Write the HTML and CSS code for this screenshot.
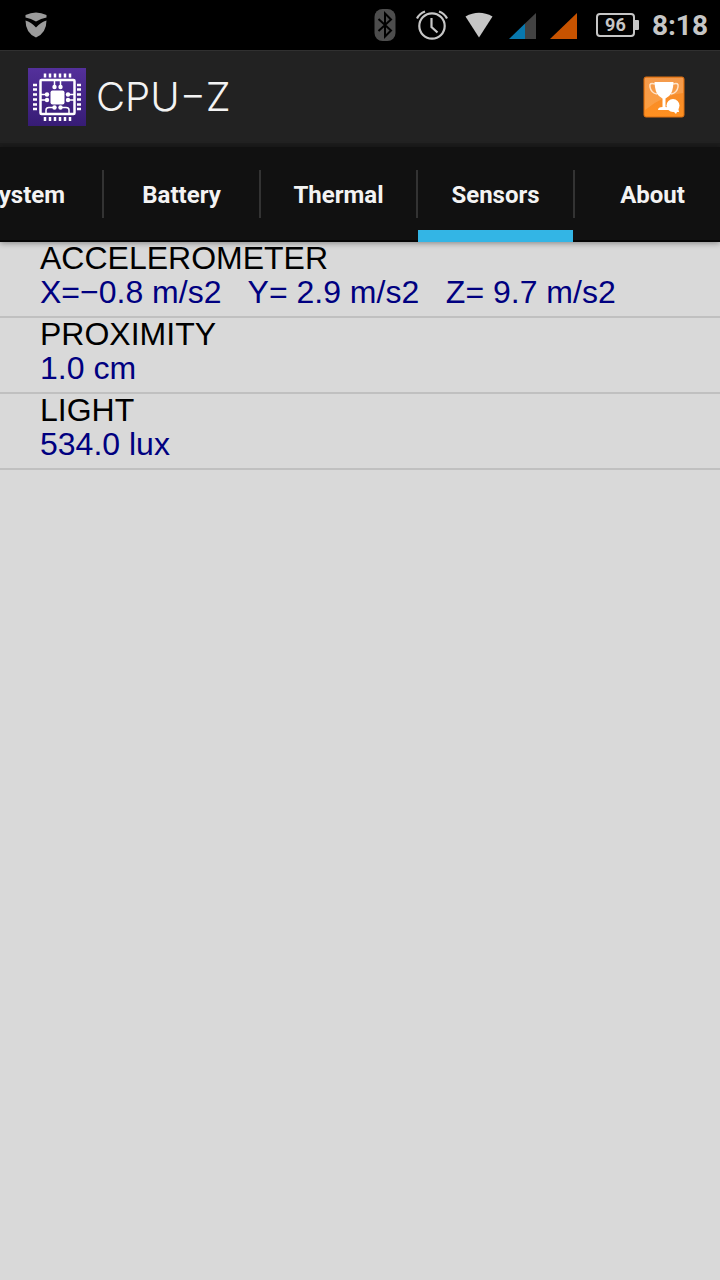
FILE: index.html
```html
<!DOCTYPE html>
<html lang="en">
<head>
  <meta charset="UTF-8">
  <meta name="viewport" content="width=device-width, initial-scale=1.0">
  <title>CPU-Z</title>
  <link rel="stylesheet" href="styles.css">
</head>
<body>
  <div class="status-bar">
    <svg class="shield" width="22" height="26" viewBox="0 0 22 26" fill="#9b9b9b">
      <path d="M0.500 3Q11 -2 21.500 3V5.500Q16 6.500 11 9.500Q6 6.500 0.500 5.500Z"/>
      <path d="M0.500 8.500Q6 10 11 15.500Q16 10 21.500 8.500Q21.500 21 11 25.500Q0.500 21 0.500 8.500Z"/>
    </svg>
    <div class="status-icons">
      <svg width="22" height="34" viewBox="0 0 22 34">
        <rect x="0.500" y="1" width="21" height="32" rx="8" fill="#4d4d4d"/>
        <path d="M4.500 11L17 22.500L11 28.500V5.500L17 11.500L4.500 23" fill="none" stroke="#000" stroke-width="2"/>
      </svg>
      <svg width="32" height="32" viewBox="0 0 32 32" fill="none" stroke="#c6c6c6" stroke-width="2.200">
        <circle cx="16" cy="17" r="12.700"/>
        <path d="M15.500 9V18L21.500 23.500M1 9.500Q3.500 4.500 9 2.500M31 9.500Q28.500 4.500 23 2.500"/>
      </svg>
      <svg class="wifi" width="28" height="26" viewBox="0 0 28 26">
        <path d="M0.500 4.500Q14 -3 27.500 4.500L14 25.500Z" fill="#c6c6c6"/>
      </svg>
      <svg class="signal" width="27" height="26" viewBox="0 0 27 26">
        <path d="M0 26L16 10.500V26Z" fill="#0878ae"/>
        <path d="M16 10.500L27 0V26H16Z" fill="#424242"/>
      </svg>
      <svg class="signal" width="27" height="26" viewBox="0 0 27 26">
        <path d="M0 26L27 0V26Z" fill="#c75300"/>
      </svg>
      <div class="battery">96</div>
    </div>
    <time class="clock">8:18</time>
  </div>

  <header class="action-bar">
    <svg width="60" height="60" viewBox="0 0 60 60">
      <defs>
        <linearGradient id="purple" x1="0" y1="0" x2="0" y2="1">
          <stop offset="0" stop-color="#54309b"/>
          <stop offset="1" stop-color="#371c75"/>
        </linearGradient>
      </defs>
      <rect x="1" y="1" width="58" height="58" fill="url(#purple)"/>
      <g stroke="#fff" fill="none">
        <rect x="13.500" y="13" width="34" height="34" rx="1" stroke-width="2.500"/>
        <path stroke-width="2.500" d="M18 6.500V10.500M23 6.500V10.500M28 6.500V10.500M33 6.500V10.500M38 6.500V10.500M43 6.500V10.500M18 50V54M23 50V54M28 50V54M33 50V54M38 50V54M43 50V54"/>
        <path stroke-width="2.500" d="M6 18H10M6 22.500H10M6 27.500H10M6 32.500H10M6 37.500H10M6 42H10M50 18H54M50 22.500H54M50 27.500H54M50 32.500H54M50 37.500H54M50 42H54"/>
        <path stroke-width="1.500" d="M27.500 13V21M33.500 13V21M14 27.500H20M14 33H20M41 27.500H47M41 33H47M19 46V43Q19 40.500 22 40.500H27M42 46V43Q42 40.500 39 40.500H34"/>
      </g>
      <g fill="#fff">
        <rect x="23.500" y="23.500" width="14" height="14" rx="2"/>
        <circle cx="27.500" cy="20" r="2.200"/>
        <circle cx="33.500" cy="20" r="2.200"/>
        <circle cx="20" cy="27.500" r="2.200"/>
        <circle cx="20" cy="33" r="2.200"/>
        <circle cx="41" cy="27.500" r="2.200"/>
        <circle cx="41" cy="33" r="2.200"/>
        <circle cx="27.500" cy="40.500" r="2.200"/>
        <circle cx="33.500" cy="40.500" r="2.200"/>
      </g>
    </svg>
    <h1>CPU−Z</h1>
    <button class="award" aria-label="Validate">
      <svg width="42" height="42" viewBox="0 0 42 42">
        <defs>
          <linearGradient id="orange" x1="0" y1="0" x2="0" y2="1">
            <stop offset="0" stop-color="#f28a30"/>
            <stop offset="1" stop-color="#ff9020"/>
          </linearGradient>
        </defs>
        <rect x="1" y="1" width="40" height="40" rx="2" fill="url(#orange)" stroke="#d96e12"/>
        <path d="M2 2H40V17Q20 19 2 34Z" fill="#fff" opacity="0.140"/>
        <path d="M12 8Q6 6 7 11Q8 17 14 18M30 8Q36 6 35 11Q34 17 28 18" fill="none" stroke="#ffe3c8" stroke-width="1.500"/>
        <path d="M11.500 6H30.500Q30 17 26 20L22.500 22.500V31Q27 31 27 34H15Q15 31 19.500 31V22.500L16 20Q12 17 11.500 6Z" fill="#fff"/>
        <circle cx="30" cy="29.500" r="6.500" fill="#fff"/>
        <path d="M29 34L33 38L34 36L36 36L35 31Z" fill="#fff"/>
      </svg>
    </button>
  </header>

  <nav class="tabs">
    <a href="#system">System</a>
    <a href="#battery">Battery</a>
    <a href="#thermal">Thermal</a>
    <a href="#sensors" class="active" aria-current="page">Sensors</a>
    <a href="#about">About</a>
  </nav>

  <main id="sensors">
    <dl class="sensor">
      <dt>ACCELEROMETER</dt>
      <dd>X=−0.8 m/s2   Y= 2.9 m/s2   Z= 9.7 m/s2</dd>
    </dl>
    <dl class="sensor">
      <dt>PROXIMITY</dt>
      <dd>1.0 cm</dd>
    </dl>
    <dl class="sensor">
      <dt>LIGHT</dt>
      <dd>534.0 lux</dd>
    </dl>
  </main>
</body>
</html>
```
FILE: styles.css
```css
body {
  margin: 0;
  min-height: 100vh;
  display: flex;
  flex-direction: column;
  background-color: #d9d9d9;
  font-family: "Liberation Sans", Arial, sans-serif;
}

svg {
  display: block;
  flex-shrink: 0;
}

.status-bar {
  display: flex;
  align-items: center;
  height: 50px;
  padding: 0 12px 0 25px;
  background-color: #000;
  color: #c6c6c6;
  font-family: Roboto, sans-serif;
  font-weight: bold;
}

.status-icons {
  display: flex;
  align-items: center;
  gap: 20px;
  margin-left: auto;
}

.wifi {
  margin: 0 -4px 0 -3px;
}

.signal {
  margin-top: 2px;
  margin-right: -6px;
}

.signal + .battery {
  margin-left: 5px;
}

.battery {
  position: relative;
  box-sizing: border-box;
  width: 39px;
  height: 24px;
  border: 2px solid #c6c6c6;
  border-radius: 4px;
  font-size: 18px;
  line-height: 20px;
  text-align: center;
}

.battery::after {
  content: "";
  position: absolute;
  top: 5px;
  right: -6px;
  width: 4px;
  height: 10px;
  border-radius: 0 1px 1px 0;
  background-color: #c6c6c6;
}

.clock {
  margin-left: 17px;
  padding-top: 2px;
  font-size: 28px;
  line-height: 32px;
}

.action-bar {
  display: flex;
  align-items: center;
  box-sizing: border-box;
  height: 97px;
  padding: 0 35px 0 27px;
  border-top: 1px solid #303030;
  border-bottom: 4px solid #1c1c1c;
  background-color: #222;
}

.action-bar h1 {
  margin: 0 0 0 9px;
  color: #f3f3f3;
  font-family: Inter, sans-serif;
  font-size: 40px;
  font-weight: 300;
  line-height: 48px;
}

.award {
  margin-left: auto;
  padding: 0;
  border: none;
  background: none;
  cursor: pointer;
}

.tabs {
  display: flex;
  height: 95px;
  overflow: hidden;
  background-color: #111;
  box-shadow: 0 1px 6px rgba(0, 0, 0, 0.4), inset 0 -2px #060606;
}

.tabs a {
  position: relative;
  display: flex;
  flex: 0 0 157px;
  align-items: center;
  justify-content: center;
  color: #f3f3f3;
  font-family: Roboto, sans-serif;
  font-size: 24px;
  font-weight: bold;
  text-decoration: none;
}

/* the strip is scrolled, the first tab is partly out of view */
.tabs a:first-child {
  margin-left: -54px;
}

.tabs a + a::before {
  content: "";
  position: absolute;
  top: 23px;
  left: -1px;
  width: 2px;
  height: 48px;
  background-color: #333;
}

.tabs .active::after {
  content: "";
  position: absolute;
  right: 1px;
  bottom: 0;
  left: 1px;
  height: 12px;
  background-color: #33b5e5;
}

.sensor {
  margin: 0;
  padding: 0 40px 6px;
  border-bottom: 2px solid #c0c0c0;
  color: #000;
  font-size: 32px;
  line-height: 32px;
}

.sensor dd {
  margin: 0;
  color: #000080;
  line-height: 36px;
  white-space: pre-wrap;
}
```
